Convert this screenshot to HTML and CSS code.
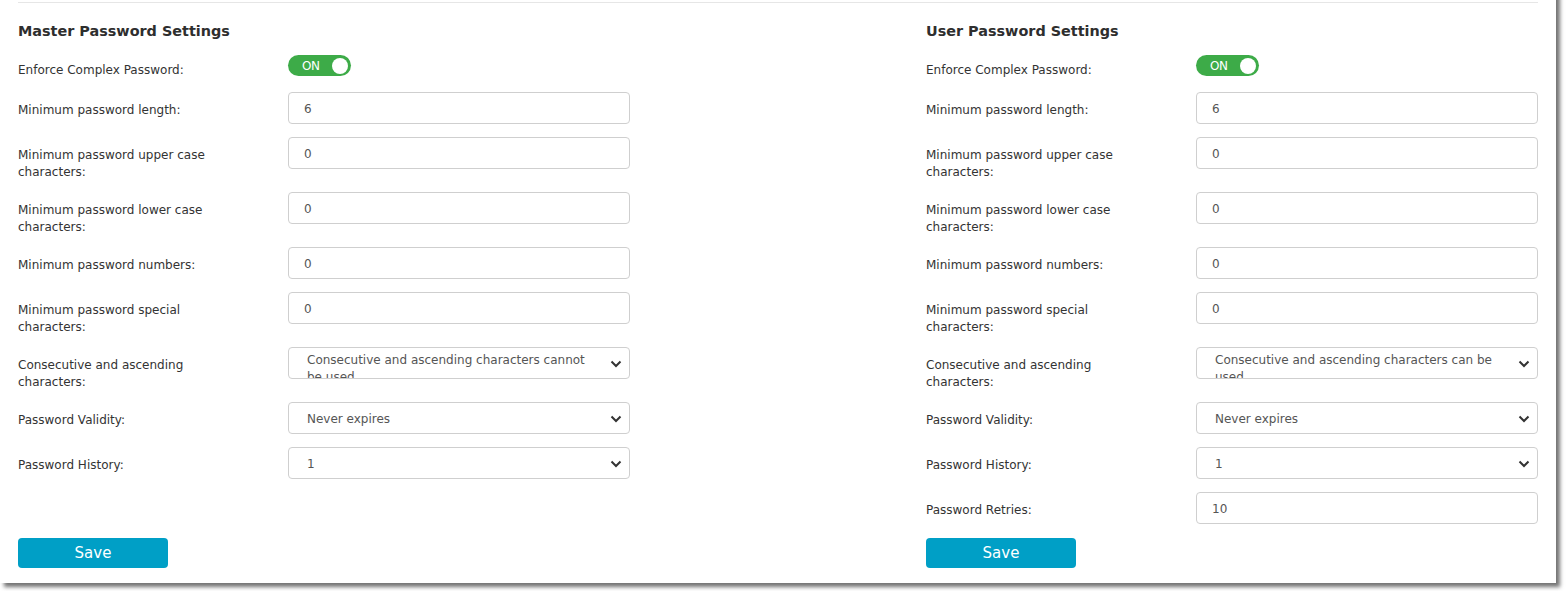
FILE: index.html
```html
<!DOCTYPE html>
<html>
<head>
<meta charset="utf-8">
<link rel="stylesheet" href="styles.css">
</head>
<body>
<div class="panel">
  <div class="rule"></div>
  <div class="cols">
    <section class="col">
      <h2 class="title">Master Password Settings</h2>
      <div class="row row-toggle">
        <label class="lbl">Enforce Complex Password:</label>
        <div class="toggle"><span class="toggle-text">ON</span><span class="knob"></span></div>
      </div>
      <div class="row"><label class="lbl">Minimum password length:</label><div class="field">6</div></div>
      <div class="row"><label class="lbl">Minimum password upper case characters:</label><div class="field">0</div></div>
      <div class="row"><label class="lbl">Minimum password lower case characters:</label><div class="field">0</div></div>
      <div class="row"><label class="lbl">Minimum password numbers:</label><div class="field">0</div></div>
      <div class="row"><label class="lbl">Minimum password special characters:</label><div class="field">0</div></div>
      <div class="row"><label class="lbl">Consecutive and ascending characters:</label>
        <div class="field select wrap"><span class="sel-text">Consecutive and ascending characters cannot be used</span>
          <svg class="chev" viewBox="0 0 12 8" width="12" height="8"><path d="M1.5 1.5 L6 6 L10.5 1.5" fill="none" stroke="#333" stroke-width="2"/></svg></div></div>
      <div class="row"><label class="lbl">Password Validity:</label>
        <div class="field select"><span class="sel-text">Never expires</span>
          <svg class="chev" viewBox="0 0 12 8" width="12" height="8"><path d="M1.5 1.5 L6 6 L10.5 1.5" fill="none" stroke="#333" stroke-width="2"/></svg></div></div>
      <div class="row"><label class="lbl">Password History:</label>
        <div class="field select"><span class="sel-text">1</span>
          <svg class="chev" viewBox="0 0 12 8" width="12" height="8"><path d="M1.5 1.5 L6 6 L10.5 1.5" fill="none" stroke="#333" stroke-width="2"/></svg></div></div>
      <button class="save">Save</button>
    </section>
    <section class="col">
      <h2 class="title">User Password Settings</h2>
      <div class="row row-toggle">
        <label class="lbl">Enforce Complex Password:</label>
        <div class="toggle"><span class="toggle-text">ON</span><span class="knob"></span></div>
      </div>
      <div class="row"><label class="lbl">Minimum password length:</label><div class="field">6</div></div>
      <div class="row"><label class="lbl">Minimum password upper case characters:</label><div class="field">0</div></div>
      <div class="row"><label class="lbl">Minimum password lower case characters:</label><div class="field">0</div></div>
      <div class="row"><label class="lbl">Minimum password numbers:</label><div class="field">0</div></div>
      <div class="row"><label class="lbl">Minimum password special characters:</label><div class="field">0</div></div>
      <div class="row"><label class="lbl">Consecutive and ascending characters:</label>
        <div class="field select wrap"><span class="sel-text">Consecutive and ascending characters can be used</span>
          <svg class="chev" viewBox="0 0 12 8" width="12" height="8"><path d="M1.5 1.5 L6 6 L10.5 1.5" fill="none" stroke="#333" stroke-width="2"/></svg></div></div>
      <div class="row"><label class="lbl">Password Validity:</label>
        <div class="field select"><span class="sel-text">Never expires</span>
          <svg class="chev" viewBox="0 0 12 8" width="12" height="8"><path d="M1.5 1.5 L6 6 L10.5 1.5" fill="none" stroke="#333" stroke-width="2"/></svg></div></div>
      <div class="row"><label class="lbl">Password History:</label>
        <div class="field select"><span class="sel-text">1</span>
          <svg class="chev" viewBox="0 0 12 8" width="12" height="8"><path d="M1.5 1.5 L6 6 L10.5 1.5" fill="none" stroke="#333" stroke-width="2"/></svg></div></div>
      <div class="row row-last"><label class="lbl">Password Retries:</label><div class="field">10</div></div>
      <button class="save">Save</button>
    </section>
  </div>
</div>
</body>
</html>
```
FILE: styles.css
```css
html, body {
  margin: 0;
  padding: 0;
  background: #fff;
}
body {
  font-family: "DejaVu Sans", Verdana, sans-serif;
  font-size: 12px;
  color: #333;
  padding-bottom: 20px;
}
.panel {
  width: 1556px;
  margin-top: -10px;
  padding: 12px 18px 15px;
  box-sizing: border-box;
  background: #fff;
  box-shadow: 4px 4px 4px rgba(0, 0, 0, 0.55);
}
.rule {
  height: 0;
  border-top: 1px solid #e6e6e6;
}
.cols {
  display: grid;
  grid-template-columns: 612px 612px;
  justify-content: space-between;
}
.col {
  display: flex;
  flex-direction: column;
}
.title {
  margin: 18px 0 14px;
  font-size: 14.4px;
  line-height: 20px;
  font-weight: bold;
  color: #2e2e2e;
}
.row {
  display: flex;
  align-items: flex-start;
  margin-bottom: 13px;
}
.row-last {
  margin-bottom: 14px;
}
.lbl {
  width: 270px;
  flex: none;
  box-sizing: border-box;
  padding: 10px 40px 0 0;
  margin-bottom: -2px;
  line-height: 17px;
}
.row-toggle .lbl {
  padding-top: 7px;
  margin-bottom: 0;
}
.toggle {
  width: 63px;
  height: 21px;
  border-radius: 11px;
  background: #3dab48;
  display: flex;
  align-items: center;
  justify-content: space-between;
  box-sizing: border-box;
  padding: 0 3px 0 14px;
}
.toggle-text {
  color: #fff;
  font-size: 12px;
  letter-spacing: -0.5px;
}
.knob {
  width: 16px;
  height: 16px;
  border-radius: 50%;
  background: #fff;
}
.field {
  width: 342px;
  height: 32px;
  box-sizing: border-box;
  border: 1px solid #cfcfcf;
  border-radius: 4px;
  padding: 1px 15px 0;
  line-height: 30px;
  color: #555;
  font-size: 12px;
}
.select {
  display: flex;
  align-items: flex-start;
  justify-content: space-between;
  padding: 1px 7px 0 18px;
  overflow: hidden;
}
.sel-text {
  line-height: 30px;
  flex: 1;
}
.wrap .sel-text {
  line-height: 17px;
  padding-top: 3px;
  padding-right: 22px;
}
.chev {
  flex: none;
  margin-top: 11px;
}
.save {
  margin-top: auto;
  width: 150px;
  height: 30px;
  border: 0;
  border-radius: 4px;
  background: #009fc6;
  color: #fff;
  font-family: "DejaVu Sans", Verdana, sans-serif;
  font-size: 15px;
  padding: 0;
}
```
